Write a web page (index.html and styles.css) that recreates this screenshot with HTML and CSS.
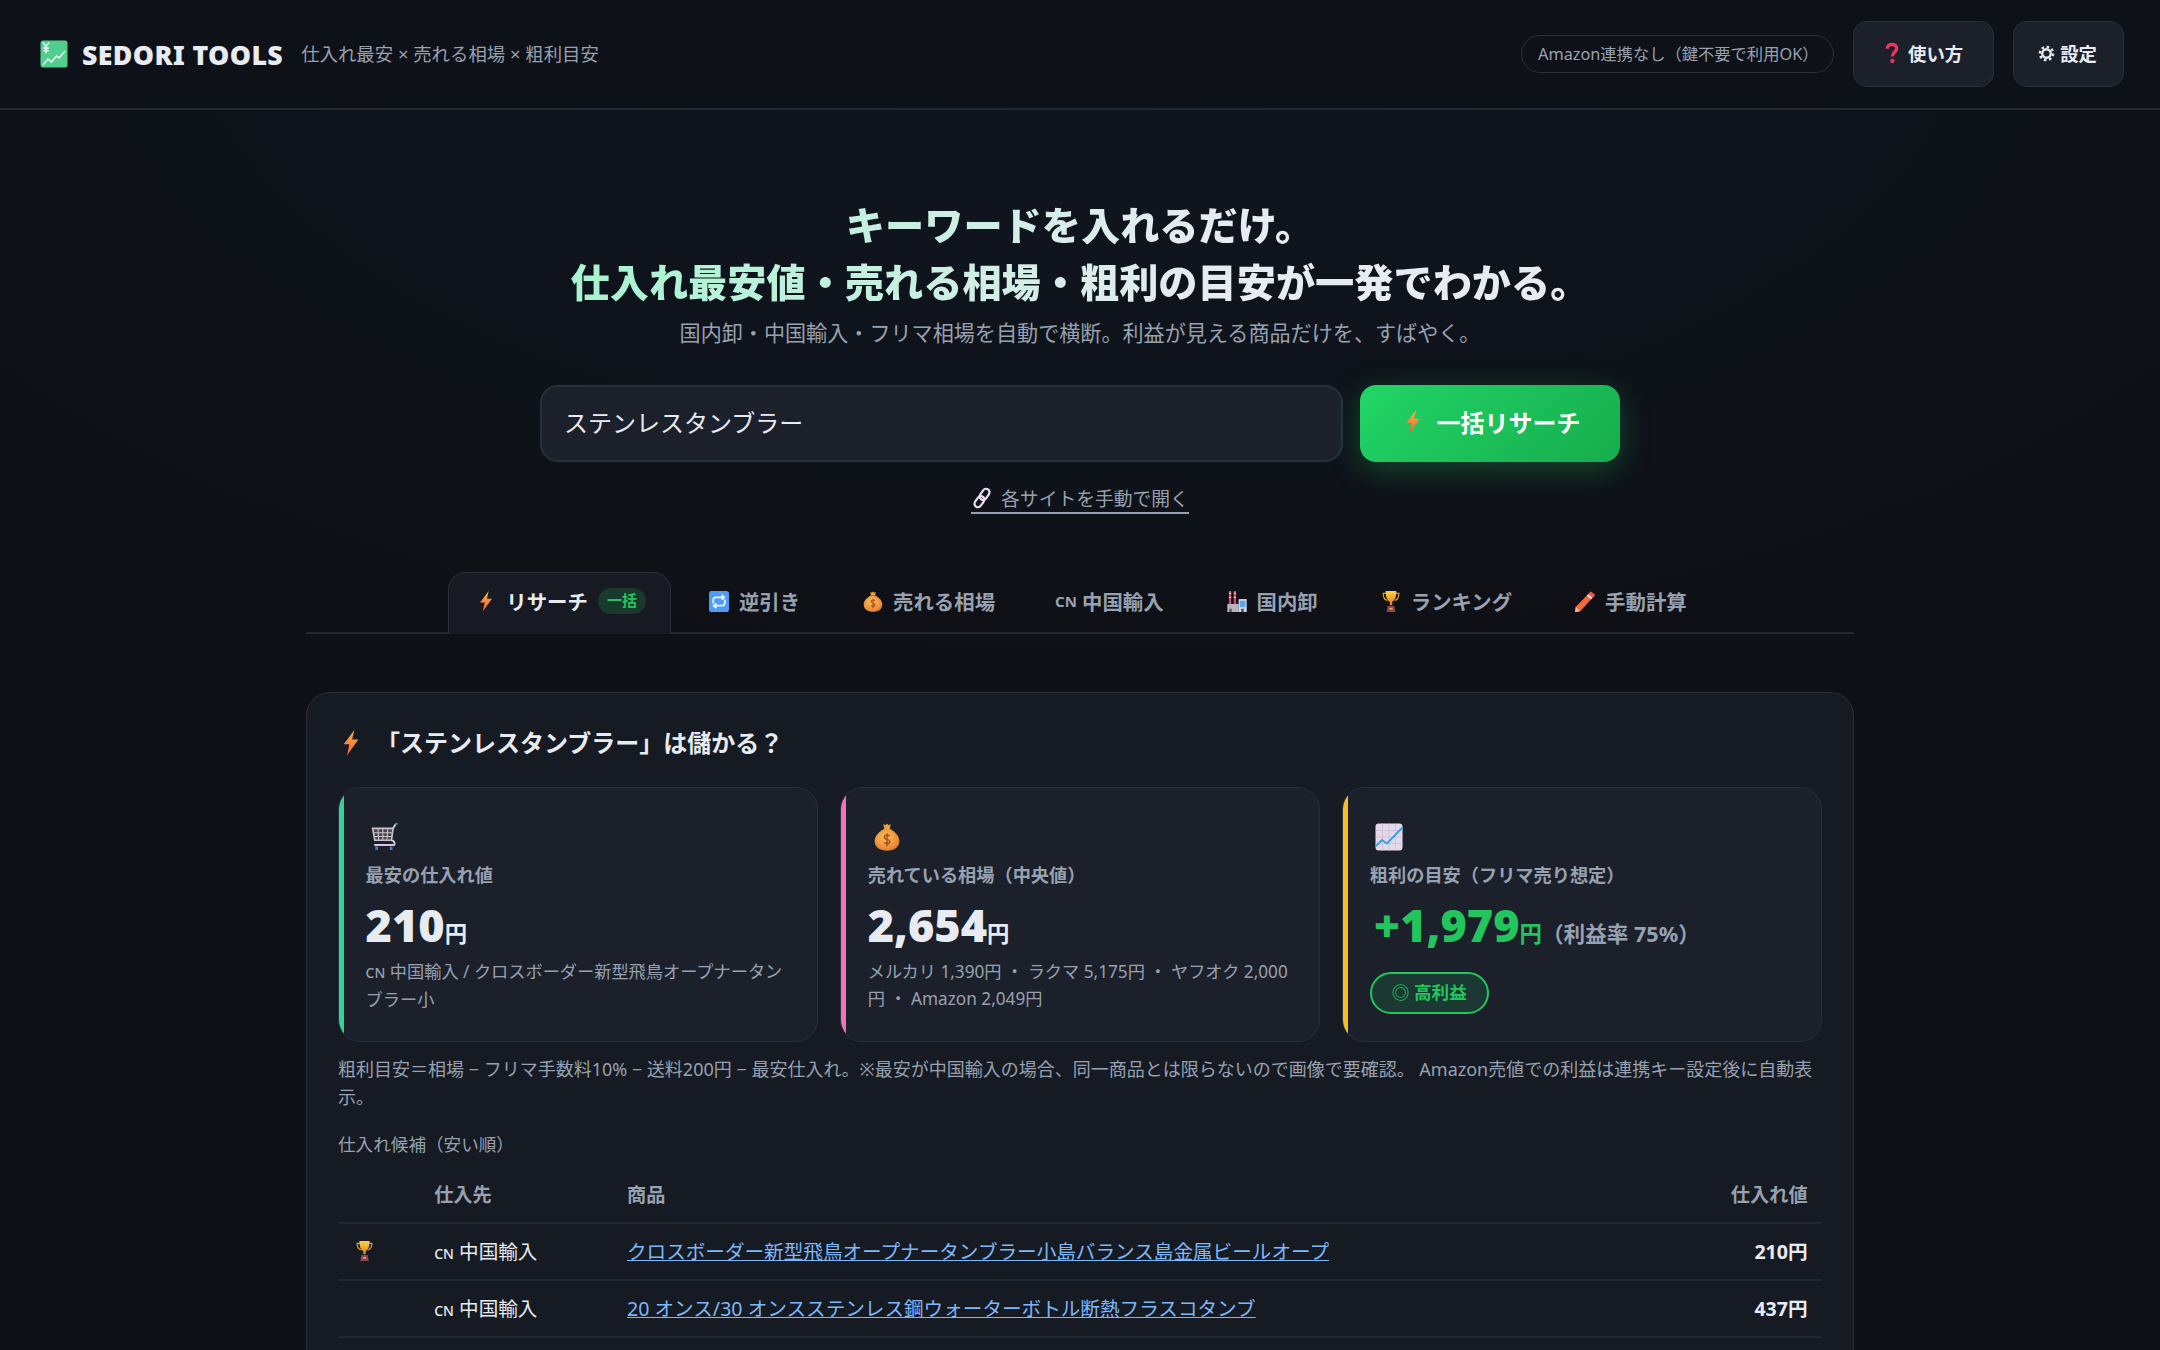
FILE: index.html
```html
<!DOCTYPE html>
<html lang="ja">
<head>
  <meta charset="UTF-8" />
  <meta name="viewport" content="width=device-width, initial-scale=1.0"/>
  <title>SEDORI TOOLS</title>
  <link rel="stylesheet" href="styles.css">
</head>
<body>
  <!-- アイコン定義 -->
  <svg class="sprite" aria-hidden="true">
    <defs>
      <linearGradient id="boltFill" x1="0" y1="0" x2="0" y2="1">
        <stop offset="0" stop-color="#ffb83d"/>
        <stop offset="1" stop-color="#ef5a3c"/>
      </linearGradient>
      <radialGradient id="bagFill" cx="0.45" cy="0.4" r="0.7">
        <stop offset="0" stop-color="#ffc256"/>
        <stop offset="1" stop-color="#e0762c"/>
      </radialGradient>
      <linearGradient id="cupFill" x1="0" y1="0" x2="0" y2="1">
        <stop offset="0" stop-color="#ffd23f"/>
        <stop offset="1" stop-color="#d9821f"/>
      </linearGradient>
    </defs>
    <symbol id="i-logo" viewBox="0 0 28 28">
      <rect x="0.5" y="0.5" width="27" height="27" rx="2.5" fill="#4fcf8d"/>
      <path d="M3 2.5l3 4 3-4M6 6.5v7M3.2 8h5.6M3.2 10.6h5.6" fill="none" stroke="#fff" stroke-width="1.3"/>
      <path d="M3 25l5-6 3.5 3 5-6 2.5 2 6-7" fill="none" stroke="#fff" stroke-width="1.3"/>
    </symbol>
    <symbol id="i-question" viewBox="0 0 20 28">
      <path d="M4 8.500C4 4.500 7 3 10 3s6 1.800 6 5.300c0 4.400-5.500 4.700-5.500 10" fill="none" stroke="#f0335f" stroke-width="4.200"/>
      <circle cx="10.500" cy="24" r="2.800" fill="#f0335f"/>
    </symbol>
    <symbol id="i-gear" viewBox="0 0 20 20">
      <circle cx="10" cy="10" r="7.800" fill="none" stroke="#e8ebf2" stroke-width="2.800" stroke-dasharray="3.100 3"/>
      <circle cx="10" cy="10" r="5" fill="none" stroke="#e8ebf2" stroke-width="2.800"/>
    </symbol>
    <symbol id="i-bolt" viewBox="6 3 14 23">
      <path d="M16 3L6.500 15.500h5L9.500 25.500l10-14H14z" fill="url(#boltFill)"/>
    </symbol>
    <symbol id="i-link" viewBox="0 0 22 24">
      <g fill="none" stroke="#eadcf0" stroke-width="2.200" transform="rotate(35 11 12)">
        <rect x="7.500" y="1.500" width="7" height="12" rx="3.500"/>
        <rect x="7.500" y="10.500" width="7" height="12" rx="3.500"/>
      </g>
    </symbol>
    <symbol id="i-repeat" viewBox="3.500 4 19 20">
      <rect x="3.500" y="4" width="19" height="20" rx="2.500" fill="#4f9bf5"/>
      <path d="M7.500 16v-3.500c0-1.500 1-2.500 2.500-2.500h7M15.500 7.800l2.500 2.200-2.500 2.200M18.500 12v3.500c0 1.500-1 2.500-2.500 2.500H9M10.500 15.800L8 18l2.500 2.200" fill="none" stroke="#eaf3ff" stroke-width="1.700"/>
    </symbol>
    <symbol id="i-bag" viewBox="1.500 1 23 26">
      <path d="M9.500 2l2 1.200L13 1.500l1.500 1.700 2-1.200-1 4.500h-5z" fill="#e9a13c"/>
      <path d="M10 6.500h6c5 3 8.500 6.500 8.500 11.500 0 5.500-5 8.800-11.500 8.800S1.500 23.500 1.500 18c0-5 3.500-8.500 8.500-11.500z" fill="url(#bagFill)"/>
      <path d="M15.500 13.500c-.5-1-1.500-1.300-2.500-1.300-1.400 0-2.500.7-2.500 2s1.100 1.700 2.500 2 2.500.8 2.500 2.100-1.100 2-2.500 2c-1 0-2-.4-2.500-1.300M13 10.500v12" fill="none" stroke="#a4502a" stroke-width="1.400"/>
    </symbol>
    <symbol id="i-factory" viewBox="0 0 24 26">
      <rect x="2" y="0" width="2.800" height="18" fill="#c6516e"/>
      <rect x="8" y="0" width="2.800" height="18" fill="#c6516e"/>
      <path d="M2 3h2.800M8 3h2.800M2 8h2.800M8 8h2.800" stroke="#ecd5da" stroke-width="1.500"/>
      <rect x="0" y="16" width="14" height="10" fill="#b8b2bd"/>
      <rect x="14" y="10" width="10" height="16" fill="#d7d7de"/>
      <rect x="15.500" y="12" width="7" height="8" fill="#58a8ef"/>
      <rect x="2.500" y="22" width="3" height="4" fill="#5d5862"/>
      <rect x="17" y="22" width="3.500" height="4" fill="#5d5862"/>
    </symbol>
    <symbol id="i-trophy" viewBox="2.500 1.500 21 25.500">
      <path d="M7 4.500H3.500c0 5 1.500 7.500 5 8.500M19 4.500h3.500c0 5-1.500 7.500-5 8.500" fill="none" stroke="#e3a02b" stroke-width="1.500"/>
      <path d="M6.500 1.500h13c0 7-1.500 11-5 13v4h-3v-4c-3.500-2-5-6-5-13z" fill="url(#cupFill)"/>
      <path d="M9 19.500h8l1.500 7.500h-11z" fill="#8c4153"/>
      <rect x="11" y="22" width="4" height="2" fill="#e9b43c"/>
    </symbol>
    <symbol id="i-pencil" viewBox="0 0 24 24">
      <path d="M18.500 0.500L23.500 4.500 6.500 23 0.500 24l1-6z" fill="#f4693a"/>
      <path d="M18.500 0.500l5 4-2.300 2.600-5-4z" fill="#f0574a"/>
      <path d="M15.600 3.700l5 4-1.500 1.700-5-4z" fill="#f6dfe0"/>
      <path d="M1.500 18l5 5-6 1z" fill="#e6b6a4"/>
    </symbol>
    <symbol id="i-cart" viewBox="1 1 25 26">
      <path d="M2 6h19l-1.500 11H4z" fill="#4a4550" stroke="#c9c3cc" stroke-width="1.500"/>
      <path d="M3 10h17.500M3.500 13.500h16.500M7 6l.6 11M11.500 6v11M16 6l-.6 11" stroke="#c9c3cc" stroke-width="1"/>
      <path d="M21 6l2.500-4M19.500 17c3 .5 3.500 3.500 2.500 4.500H4" fill="none" stroke="#d6ccd8" stroke-width="1.700"/>
      <path d="M23 2l2.500-.8" stroke="#3f83c9" stroke-width="2"/>
      <rect x="3.500" y="20.500" width="19" height="1.500" fill="#d8c4e6"/>
      <rect x="4.500" y="23" width="2.500" height="3" fill="#3f83c9"/>
      <rect x="18" y="23" width="2.500" height="3" fill="#3f83c9"/>
    </symbol>
    <symbol id="i-chart" viewBox="0 0 28 28">
      <rect x="0.500" y="0.500" width="27" height="27" rx="3" fill="#e3d9ea"/>
      <path d="M0.500 7.500h27M0.500 14h27M0.500 20.500h27M7.500 0.500v27M14 0.500v27M20.500 0.500v27" stroke="#cbbfd6" stroke-width="0.800"/>
      <path d="M1 23l6-6 5 3.500L27.500 4.500" fill="none" stroke="#3f9fe0" stroke-width="2"/>
    </symbol>
  </svg>

  <header class="topbar">
    <div class="brand">
      <svg class="brand-icon"><use href="#i-logo"/></svg>
      <span class="brand-name">SEDORI TOOLS</span>
      <span class="brand-tag">仕入れ最安 × 売れる相場 × 粗利目安</span>
    </div>
    <div class="top-actions">
      <span class="status-pill">Amazon連携なし（鍵不要で利用OK）</span>
      <button class="top-btn help-btn"><svg class="ico-question"><use href="#i-question"/></svg><span>使い方</span></button>
      <button class="top-btn"><svg class="ico-gear"><use href="#i-gear"/></svg><span>設定</span></button>
    </div>
  </header>

  <section class="hero">
    <h1>キーワードを入れるだけ。<br>仕入れ最安値・売れる相場・粗利の目安が一発でわかる。</h1>
    <p class="hero-sub">国内卸・中国輸入・フリマ相場を自動で横断。利益が見える商品だけを、すばやく。</p>
    <div class="search-row">
      <input class="search-input" type="text" value="ステンレスタンブラー">
      <button class="search-btn"><svg class="ico"><use href="#i-bolt"/></svg>一括リサーチ</button>
    </div>
    <a class="manual-link" href="#"><svg class="ico-link"><use href="#i-link"/></svg>各サイトを手動で開く</a>
  </section>

  <main class="container">
    <nav class="tabs">
      <a class="tab active" href="#"><svg class="ico"><use href="#i-bolt"/></svg>リサーチ<span class="tab-badge">一括</span></a>
      <a class="tab" href="#"><svg class="ico"><use href="#i-repeat"/></svg>逆引き</a>
      <a class="tab" href="#"><svg class="ico"><use href="#i-bag"/></svg>売れる相場</a>
      <a class="tab" href="#"><span class="flag">CN</span>中国輸入</a>
      <a class="tab" href="#"><svg class="ico"><use href="#i-factory"/></svg>国内卸</a>
      <a class="tab" href="#"><svg class="ico"><use href="#i-trophy"/></svg>ランキング</a>
      <a class="tab" href="#"><svg class="ico"><use href="#i-pencil"/></svg>手動計算</a>
    </nav>

    <div class="result-card">
      <h2 class="result-title"><svg class="ico"><use href="#i-bolt"/></svg>「ステンレスタンブラー」は儲かる？</h2>

      <div class="stat-grid">
        <div class="stat stat-green">
          <svg class="stat-icon"><use href="#i-cart"/></svg>
          <div class="stat-label">最安の仕入れ値</div>
          <div class="stat-value">210<span class="yen">円</span></div>
          <div class="stat-sub"><span class="flag-sm">CN</span> 中国輸入 / クロスボーダー新型飛鳥オープナータンブラー小</div>
        </div>
        <div class="stat stat-pink">
          <svg class="stat-icon"><use href="#i-bag"/></svg>
          <div class="stat-label">売れている相場（中央値）</div>
          <div class="stat-value">2,654<span class="yen">円</span></div>
          <div class="stat-sub">メルカリ 1,390円 ・ ラクマ 5,175円 ・ ヤフオク 2,000円 ・ Amazon 2,049円</div>
        </div>
        <div class="stat stat-yellow">
          <svg class="stat-icon"><use href="#i-chart"/></svg>
          <div class="stat-label">粗利の目安（フリマ売り想定）</div>
          <div class="stat-value profit">+1,979<span class="yen">円</span><span class="rate">（利益率 75%）</span></div>
          <span class="profit-badge">◎ 高利益</span>
        </div>
      </div>

      <p class="note">粗利目安＝相場 − フリマ手数料10% − 送料200円 − 最安仕入れ。※最安が中国輸入の場合、同一商品とは限らないので画像で要確認。 Amazon売値での利益は連携キー設定後に自動表示。</p>
      <p class="list-title">仕入れ候補（安い順）</p>

      <table class="source-table">
        <thead>
          <tr>
            <th class="col-rank"></th>
            <th class="col-source">仕入先</th>
            <th>商品</th>
            <th class="col-price">仕入れ値</th>
          </tr>
        </thead>
        <tbody>
          <tr>
            <td class="col-rank"><svg class="ico-rank"><use href="#i-trophy"/></svg></td>
            <td><span class="flag-sm">CN</span> 中国輸入</td>
            <td><a href="#">クロスボーダー新型飛鳥オープナータンブラー小島バランス島金属ビールオープ</a></td>
            <td class="col-price">210円</td>
          </tr>
          <tr>
            <td class="col-rank"></td>
            <td><span class="flag-sm">CN</span> 中国輸入</td>
            <td><a href="#">20 オンス/30 オンスステンレス鋼ウォーターボトル断熱フラスコタンブ</a></td>
            <td class="col-price">437円</td>
          </tr>
        </tbody>
      </table>
    </div>
  </main>
</body>
</html>
```

FILE: styles.css
```css
html, body {
  height: 1350px;
  overflow: hidden;
}

body {
  margin: 0;
  background: radial-gradient(ellipse 1400px 700px at 50% 0, #101622, #0e1015);
  background-color: #0e1015;
  font-family: "Noto Sans", "Noto Sans CJK JP", sans-serif;
  color: #e8ebf2;
}

.sprite {
  display: block;
  width: 0;
  height: 0;
}

svg {
  flex: none;
}

/* ヘッダー */
.topbar {
  height: 108px;
  box-sizing: content-box;
  padding: 0 36px 0 40px;
  display: flex;
  align-items: center;
  justify-content: space-between;
  border-bottom: 2px solid #232732;
  background: #0f1118;
}

.brand {
  display: flex;
  align-items: center;
}

.brand-icon {
  width: 28px;
  height: 28px;
  margin-right: 14px;
}

.brand-name {
  font-size: 26.7px;
  font-weight: 900;
  letter-spacing: 0.4px;
  margin-right: 18px;
}

.brand-tag {
  padding-bottom: 3px;
  font-size: 18.4px;
  color: #98a1b0;
}

.top-actions {
  display: flex;
  align-items: center;
  gap: 19px;
}

.status-pill {
  height: 38px;
  box-sizing: border-box;
  padding: 0 0 2px 16px;
  width: 313px;
  display: flex;
  align-items: center;
  border: 1px solid #2a2f3a;
  border-radius: 19px;
  font-size: 16.3px;
  color: #98a1b0;
}

.top-btn {
  height: 66px;
  padding: 0 26px 2px 24px;
  display: flex;
  align-items: center;
  gap: 5px;
  background: #1c202b;
  border: 1px solid #2a2f3a;
  border-radius: 14px;
  font-family: inherit;
  font-size: 18.4px;
  font-weight: 700;
  color: #e8ebf2;
}

.help-btn {
  padding: 0 30px 2px;
  gap: 6px;
}

.ico-question {
  width: 16px;
  height: 22px;
  margin-right: 2px;
}

.ico-gear {
  width: 17px;
  height: 17px;
}

/* ヒーロー */
.hero {
  padding-top: 86px;
  text-align: center;
}

h1 {
  display: inline-block;
  margin: 0;
  font-size: 39.2px;
  line-height: 57px;
  font-weight: 900;
  background: linear-gradient(90deg, #a7f3d0, #e8ebf2 65%);
  -webkit-background-clip: text;
  background-clip: text;
  color: transparent;
}

.hero-sub {
  margin: 7px 0 0;
  font-size: 21.1px;
  line-height: 32px;
  color: #98a1b0;
}

.search-row {
  width: 1080px;
  margin: 36px auto 0;
  display: flex;
  gap: 17px;
}

.search-input {
  flex: 1;
  min-width: 0;
  height: 77px;
  box-sizing: border-box;
  padding: 0 22px 4px;
  background: #1c202b;
  border: 2px solid #2a2f3a;
  border-radius: 18px;
  font-family: inherit;
  font-size: 24px;
  color: #e8ebf2;
}

.search-btn {
  width: 260px;
  height: 77px;
  padding: 0 0 4px;
  display: flex;
  align-items: center;
  justify-content: center;
  gap: 11px;
  border: none;
  border-radius: 16px;
  background: linear-gradient(135deg, #22d566, #16ad4e);
  box-shadow: 0 8px 32px rgba(34, 197, 94, 0.3);
  font-family: inherit;
  font-size: 24px;
  font-weight: 700;
  color: #fff;
}

.search-btn .ico {
  height: 24px;
}

.manual-link {
  display: inline-flex;
  align-items: center;
  gap: 8px;
  margin-top: 22px;
  height: 28px;
  border-bottom: 2px solid #98a1b0;
  font-size: 18.8px;
  color: #98a1b0;
  text-decoration: none;
}

.ico-link {
  width: 22px;
  height: 24px;
}

/* タブ */
.container {
  width: 1548px;
  margin: 0 auto;
}

.tabs {
  margin-top: 57px;
  height: 60px;
  display: flex;
  justify-content: center;
  gap: 10px;
  border-bottom: 2px solid #232732;
}

.tab {
  height: 60px;
  box-sizing: border-box;
  padding: 0 24px 3px;
  display: flex;
  align-items: center;
  gap: 7px;
  border: 1px solid transparent;
  border-bottom: none;
  border-radius: 18px 18px 0 0;
  font-size: 20.4px;
  font-weight: 700;
  color: #98a1b0;
  text-decoration: none;
}

.tab.active {
  height: 62px;
  padding-bottom: 5px;
  background: #171a22;
  border-color: #2a2f3a;
  color: #e8ebf2;
}

.ico {
  width: 26px;
  height: 26px;
}

.tab .ico {
  height: 21px;
}

.tab-badge {
  margin-left: 3px;
  padding: 0 9px;
  height: 26px;
  line-height: 25px;
  border-radius: 13px;
  background: rgba(34, 197, 94, 0.18);
  font-size: 15px;
  color: #22c55e;
}

.flag {
  width: 20px;
  font-size: 15px;
  font-weight: 700;
}

.flag-sm {
  font-size: 14px;
  font-weight: 500;
}

/* 結果カード */
.result-card {
  margin-top: 58px;
  padding: 32px 31px 40px;
  box-sizing: border-box;
  background: #161a22;
  border: 1px solid #2a2f3a;
  border-radius: 24px;
}

.result-title {
  margin: 0;
  display: flex;
  align-items: center;
  gap: 12px;
  font-size: 24px;
  line-height: 36px;
  font-weight: 700;
}

.stat-grid {
  margin-top: 26px;
  display: grid;
  grid-template-columns: repeat(3, 1fr);
  gap: 22.4px;
}

.stat {
  position: relative;
  overflow: hidden;
  min-height: 255px;
  box-sizing: border-box;
  padding: 35px 25.6px 26px 26.6px;
  background: #1c202b;
  border: 1px solid #2a2f3a;
  border-radius: 22px;
}

/* 左端の色帯 */
.stat::before {
  content: "";
  position: absolute;
  left: -1px;
  top: -1px;
  bottom: -1px;
  width: 6px;
  background: #34d399;
}

.stat-pink::before {
  background: #f472b6;
}

.stat-yellow::before {
  background: #fbbf24;
}

.stat-icon {
  display: block;
  width: 28px;
  height: 28px;
  margin-left: 5px;
}

.stat-label {
  margin-top: 10px;
  font-size: 18.2px;
  line-height: 28px;
  font-weight: 700;
  color: #98a1b0;
}

.stat-value {
  margin-top: 12px;
  font-size: 45px;
  line-height: 48px;
  font-weight: 900;
  color: #e8ebf2;
}

.yen {
  font-size: 22.4px;
  font-weight: 700;
}

.profit {
  margin-left: 4px;
  color: #22c55e;
}

.rate {
  font-size: 21.6px;
  font-weight: 700;
  color: #98a1b0;
}

.stat-sub {
  margin-top: 0;
  font-size: 17.2px;
  line-height: 27px;
  color: #98a1b0;
}

.profit-badge {
  display: block;
  width: fit-content;
  margin-top: 14px;
  height: 42px;
  box-sizing: border-box;
  padding: 0 20px;
  line-height: 37px;
  border: 2px solid #22c55e;
  border-radius: 21px;
  background: rgba(34, 197, 94, 0.15);
  font-size: 17.6px;
  font-weight: 700;
  color: #22c55e;
}

.note {
  margin: 13px 0 0;
  font-size: 18px;
  line-height: 28px;
  color: #98a1b0;
}

.list-title {
  margin: 19px 0 0;
  font-size: 17.6px;
  line-height: 28px;
  color: #98a1b0;
}

/* 仕入れ候補テーブル */
.source-table {
  width: 100%;
  margin-top: 8px;
  border-collapse: collapse;
  font-size: 19.6px;
}

.source-table th {
  height: 56px;
  padding: 0 14.4px;
  text-align: left;
  font-size: 19.2px;
  font-weight: 700;
  color: #98a1b0;
  border-bottom: 2px solid #232732;
}

.source-table td {
  height: 57px;
  padding: 0 14.4px 2px;
  box-sizing: border-box;
  border-bottom: 2px solid #232732;
}

.source-table a {
  color: #7fb8f8;
}

.source-table .col-rank {
  width: 53px;
}

.source-table .col-source {
  width: 164px;
}

.source-table .col-price {
  width: 160px;
  text-align: right;
  font-weight: 700;
}

.ico-rank {
  display: block;
  width: 21px;
  height: 20px;
  margin-left: 2px;
}
```
